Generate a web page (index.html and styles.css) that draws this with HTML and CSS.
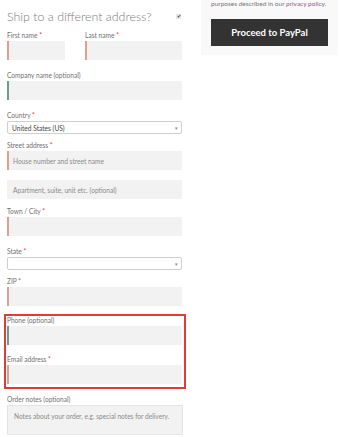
FILE: index.html
```html
<!DOCTYPE html>
<html lang="en">
<head>
    <meta charset="UTF-8">
    <meta name="viewport" content="width=device-width, initial-scale=1.0">
    <title>Checkout</title>
    <link rel="stylesheet" href="styles.css">
</head>
<body>
    <div class="checkout">
        <div class="shipping">
            <h3 class="ship-title">
                <span>Ship to a different address?</span>
                <span class="check">&#10004;</span>
            </h3>

            <div class="row">
                <div class="field half">
                    <label>First name <abbr>*</abbr></label>
                    <div class="input required"></div>
                </div>
                <div class="field wide">
                    <label>Last name <abbr>*</abbr></label>
                    <div class="input required"></div>
                </div>
            </div>

            <div class="field">
                <label>Company name (optional)</label>
                <div class="input optional"></div>
            </div>

            <div class="field select-field">
                <label>Country <abbr>*</abbr></label>
                <div class="select"><span>United States (US)</span><span class="arrow">&#9662;</span></div>
            </div>

            <div class="field stacked">
                <label>Street address <abbr>*</abbr></label>
                <div class="input required"><span class="ph">House number and street name</span></div>
                <div class="input"><span class="ph">Apartment, suite, unit etc. (optional)</span></div>
            </div>

            <div class="field">
                <label>Town / City <abbr>*</abbr></label>
                <div class="input required"></div>
            </div>

            <div class="field select-field">
                <label>State <abbr>*</abbr></label>
                <div class="select"><span></span><span class="arrow">&#9662;</span></div>
            </div>

            <div class="field">
                <label>ZIP <abbr>*</abbr></label>
                <div class="input required"></div>
            </div>

            <!-- highlighted contact fields -->
            <div class="highlight">
                <div class="field">
                    <label>Phone (optional)</label>
                    <div class="input optional"></div>
                </div>
                <div class="field">
                    <label>Email address <abbr>*</abbr></label>
                    <div class="input required"></div>
                </div>
            </div>

            <div class="field">
                <label>Order notes (optional)</label>
                <div class="textarea">Notes about your order, e.g. special notes for delivery.</div>
            </div>
        </div>

        <div class="aside">
            <p class="policy">purposes described in our <a href="#">privacy policy</a>.</p>
            <a href="#" class="paypal">Proceed to PayPal</a>
        </div>
    </div>
</body>
</html>
```

FILE: styles.css
```css
* {
    margin: 0;
    padding: 0;
    box-sizing: border-box;
}

body {
    font-family: Lato, "Open Sans", sans-serif;
    color: #6d6d6d;
    background: #fff;
    overflow: hidden;
}

.checkout {
    display: flex;
    align-items: flex-start;
}

.shipping {
    width: 190px;
    padding: 0 8px 0 7px;
}

.ship-title {
    display: flex;
    justify-content: space-between;
    align-items: center;
    height: 31px;
    padding-top: 1px;
    font-size: 12.4px;
    font-weight: 300;
    color: #7d7d7d;
}

.check {
    width: 5px;
    height: 5px;
    margin-right: 1px;
    font-size: 5px;
    line-height: 5px;
    text-align: center;
    color: #333;
    background: #e6e6e6;
}

.row {
    display: flex;
    gap: 20px;
}

.half {
    width: 58px;
}

.wide {
    flex: 1;
}

.field {
    margin-bottom: 11px;
}

.field label {
    display: block;
    height: 8px;
    margin-bottom: 2px;
    font-size: 6.6px;
    line-height: 8px;
    color: #707070;
}

.field abbr {
    color: #e2401c;
    text-decoration: none;
}

.input {
    height: 19px;
    background: #f2f2f2;
    display: flex;
    align-items: center;
    padding-left: 6px;
}

.input.required {
    border-left: 2px solid #e0a08f;
    padding-left: 4px;
}

.input.optional {
    border-left: 2px solid #6d9c8d;
}

.stacked {
    margin-bottom: 8px;
}

.stacked .input + .input {
    margin-top: 10px;
}

.ph {
    font-size: 6.6px;
    color: #8a8a8a;
}

.select-field {
    margin-bottom: 7px;
}

.select {
    height: 13px;
    border: 1px solid #cfcfcf;
    border-radius: 2px;
    display: flex;
    justify-content: space-between;
    align-items: center;
    padding: 0 3px 0 4px;
    font-size: 6.6px;
    color: #444;
    background: #fff;
}

.select .arrow {
    font-size: 5px;
    color: #888;
}

.highlight {
    margin: -3px -4px 6px -3px;
    padding: 0 2px 1px 1px;
    border: 2px solid #e03b3b;
}

.highlight .field:first-child {
    margin-bottom: 10px;
}

.highlight .field:last-child {
    margin-bottom: 2px;
}

.textarea {
    height: 30px;
    margin-right: -1px;
    padding: 6px 6px;
    font-size: 6.6px;
    line-height: 8px;
    color: #8a8a8a;
    background: #f2f2f2;
    border: 1px solid #e4e4e4;
}

.aside {
    width: 137px;
    margin-left: 11px;
    padding: 0 10px 9px;
    background: #f9f9f9;
}

.policy {
    margin-top: -2px;
    height: 21px;
    font-size: 6.5px;
    line-height: 11px;
    color: #777;
}

.policy a {
    color: #96588a;
    text-decoration: none;
}

.paypal {
    display: block;
    height: 27px;
    line-height: 27px;
    text-align: center;
    background: #333;
    color: #fff;
    font-size: 9.5px;
    font-weight: 700;
    text-decoration: none;
}
```
